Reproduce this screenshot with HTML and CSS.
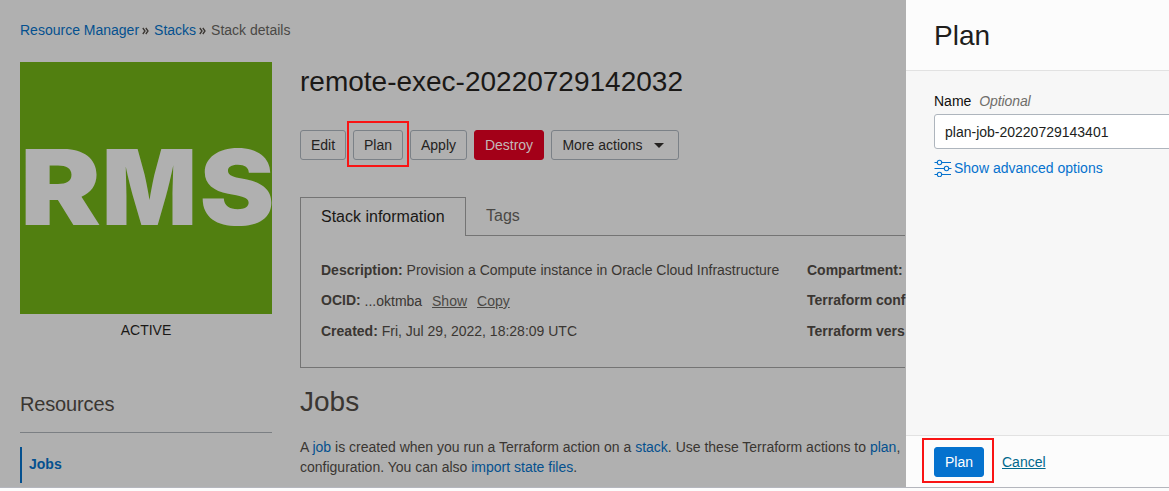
FILE: index.html
```html
<!DOCTYPE html>
<html lang="en">
<head>
<meta charset="utf-8">
<title>Stack details</title>
<link rel="stylesheet" href="styles.css">
</head>
<body>
<div class="app">
  <main class="page">
    <nav class="crumbs"><a>Resource Manager</a><svg class="sep" viewBox="0 0 7 8"><path d="M.8 1 3 4 .8 7M3.8 1 6 4 3.8 7"/></svg><a>Stacks</a><svg class="sep" viewBox="0 0 7 8"><path d="M.8 1 3 4 .8 7M3.8 1 6 4 3.8 7"/></svg><span>Stack details</span></nav>
    <div class="columns">
      <aside class="side">
        <svg class="logo" viewBox="0 0 252 252">
          <g class="logo-text">
            <text x="0" y="163" textLength="81" lengthAdjust="spacingAndGlyphs">R</text>
            <text x="82" y="163" textLength="95" lengthAdjust="spacingAndGlyphs">M</text>
            <text x="179.500" y="163" textLength="75" lengthAdjust="spacingAndGlyphs">S</text>
          </g>
        </svg>
        <div class="status">ACTIVE</div>
        <h2 class="side-title">Resources</h2>
        <a class="side-link">Jobs</a>
      </aside>
      <section class="content">
        <h1 class="title">remote-exec-20220729142032</h1>
        <div class="actions">
          <button class="btn edit">Edit</button>
          <div class="marked"><button class="btn plan">Plan</button><i class="mark"></i></div>
          <button class="btn apply">Apply</button>
          <button class="btn danger">Destroy</button>
          <button class="btn more">More actions<i class="caret"></i></button>
        </div>
        <div class="tabs"><span class="tab active">Stack information</span><span class="tab">Tags</span></div>
        <div class="info">
          <div class="facts">
            <p><b>Description:</b> Provision a Compute instance in Oracle Cloud Infrastructure</p>
            <p><b>OCID:</b> <span class="ocid">...oktmba <u>Show</u><u>Copy</u></span></p>
            <p><b>Created:</b> Fri, Jul 29, 2022, 18:28:09 UTC</p>
          </div>
          <div class="facts">
            <p><b>Compartment:</b></p>
            <p><b>Terraform conf</b></p>
            <p><b>Terraform vers</b></p>
          </div>
        </div>
        <h2 class="jobs-title">Jobs</h2>
        <p class="jobs-text">A <a>job</a> is created when you run a Terraform action on a <a>stack</a>. Use these Terraform actions to <a>plan</a>,<br>configuration. You can also <a>import state files</a>.</p>
      </section>
    </div>
  </main>
  <section class="panel">
    <header class="panel-head">Plan</header>
    <div class="panel-body">
      <div class="label">Name <em>Optional</em></div>
      <div class="field">plan-job-20220729143401</div>
      <a class="advanced"><svg class="sliders" viewBox="0 0 18 18"><path d="M.5 3.500h2.500M8 3.500h9M.5 9.500h9.500M15 9.500h2.500M.5 15.500h2.500M8 15.500h9"/><circle cx="5.500" cy="3.500" r="2.200"/><circle cx="12.500" cy="9.500" r="2.200"/><circle cx="5.500" cy="15.500" r="2.200"/></svg>Show advanced options</a>
    </div>
    <footer class="panel-foot">
      <div class="marked"><button class="btn primary">Plan</button><i class="mark mark-foot"></i></div>
      <a class="cancel">Cancel</a>
    </footer>
  </section>
</div>
</body>
</html>
```
FILE: styles.css
```css
* { box-sizing: border-box; }
body { margin: 0; height: 491px; overflow: hidden; background: #fcfcfc; font: 14px/20px "Liberation Sans", Arial, sans-serif; }
h1, h2, p { margin: 0; font-weight: normal; }
.app { display: flex; height: 488px; border-bottom: 1px solid #b4b6bd; }
.page { width: 906px; flex: none; padding: 20px 1px 0 20px; background: #b0b0b0; color: #3a3632; overflow: hidden; white-space: nowrap; }
.page a { color: #04508f; }
.crumbs { display: flex; align-items: center; height: 20px; color: #4a4845; }
.sep { width: 7px; height: 8px; margin: 1px 5px 0 3px; fill: none; stroke: #3a3632; stroke-width: 1.3; }
.columns { display: flex; gap: 28px; margin-top: 22px; }
.side { width: 252px; flex: none; }
.logo { display: block; width: 252px; height: 252px; background: #517f10; overflow: visible; }
.logo-text { font: 900 104px Inter, "Liberation Sans", sans-serif; fill: #b0b0b0; }
.status { margin-top: 6px; text-align: center; color: #1a1816; }
.side-title { margin-top: 51px; height: 42px; font-size: 20px; line-height: 26px; letter-spacing: -0.15px; border-bottom: 1px solid #7b7f83; }
.side-link { display: block; margin-top: 14px; height: 36px; padding-left: 7px; border-left: 2px solid #04508f; line-height: 34px; font-weight: bold; }
.content { width: 605px; flex: none; }
.title { height: 68px; font-size: 28px; line-height: 40px; color: #1a1816; }
.actions { display: flex; height: 30px; }
.btn { display: flex; align-items: center; justify-content: center; width: 100%; height: 30px; padding: 0; border: 1px solid #7b8187; border-radius: 3px; background: none; font: inherit; color: #242220; }
.edit { width: 46px; margin-right: 7px; }
.plan { width: 50px; }
.apply { width: 57px; margin: 0 7px; }
.danger { width: 70px; margin-right: 7px; border-color: #a30018; background: #a30018; color: #c4b9b9; }
.more { width: 128px; padding-right: 4px; gap: 11px; }
.caret { border: 5px solid transparent; border-top-color: #242220; border-bottom: 0; }
.marked { position: relative; }
.mark { position: absolute; left: -6px; top: -9px; width: 62px; height: 46px; border: 2px solid #f91414; }
.tabs { display: flex; height: 39px; margin-top: 37px; font-size: 16px; line-height: 37px; }
.tab { flex: 1; padding-left: 20px; border-bottom: 1px solid #747474; color: #4a4845; }
.active { flex: 0 0 166px; border: 1px solid #747474; border-bottom: 0; color: #1a1816; }
.info { display: flex; height: 132px; padding: 24px 0 0 20px; border: 1px solid #747474; border-width: 0 0 1px 1px; }
.facts { display: flex; flex-direction: column; gap: 10px; width: 486px; flex: none; }
.facts p:last-child { padding-top: 1px; }
.ocid { position: relative; top: 1px; }
.facts u { margin-left: 6px; color: #4a4845; }
.facts u + u { margin-left: 10px; }
.jobs-title { margin-top: 14px; font-size: 28px; line-height: 40px; }
.jobs-text { margin-top: 15px; }
.panel { display: flex; flex-direction: column; width: 263px; background: #f7f7f7; overflow: hidden; white-space: nowrap; }
.panel-head { height: 71px; padding-left: 28px; border-bottom: 1px solid #e2e2e2; background: #fcfcfc; font-size: 28px; line-height: 71px; color: #201e1c; }
.panel-body { flex: 1; padding: 20px 0 0 28px; }
.label { color: #100f0e; }
.label em { margin-left: 4px; letter-spacing: -0.1px; color: #706e6b; }
.field { width: 300px; height: 35px; margin-top: 3px; padding-left: 10px; border: 1px solid #aeb5bd; border-radius: 3px; background: #fff; line-height: 34px; color: #201e1c; }
.advanced { display: flex; margin-top: 9px; color: #0572ce; }
.sliders { width: 18px; height: 18px; margin: 1px 2px 0 0; fill: none; stroke: #0572ce; stroke-width: 1.1; }
.panel-foot { display: flex; height: 52px; padding: 11px 0 0 28px; gap: 18px; border-top: 1px solid #e2e2e2; background: #fcfcfc; }
.primary { width: 50px; border-color: #0572ce; background: #0572ce; color: #fff; }
.mark-foot { left: -12px; top: -9px; width: 72px; height: 45px; }
.cancel { line-height: 30px; color: #00688c; text-decoration: underline; }
```
